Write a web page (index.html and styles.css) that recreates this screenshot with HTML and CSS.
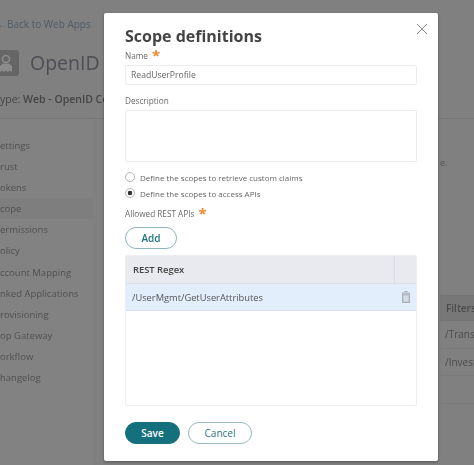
FILE: index.html
```html
<!DOCTYPE html>
<html lang="en">
<head>
<meta charset="utf-8">
<title>Scope definitions</title>
<link rel="stylesheet" href="styles.css">
</head>
<body>
<div class="page">
  <div class="back"><span class="arrow">&larr;</span>Back to Web Apps</div>
  <div class="app-head">
    <svg class="app-icon" width="19" height="26" viewBox="0 0 19 26"><rect x="-8" width="27" height="26" rx="3" fill="#666"/><circle cx="6" cy="9" r="3.500" fill="none" stroke="#8c8c8c" stroke-width="1.500"/><path d="M0 22v-6l3-2.500h6l3 2.500v6l-2-1.500-2 1.500-2-1.500-2 1.500-2-1.500z" fill="#8c8c8c"/></svg>
    <div class="app-name">OpenID Connect</div>
  </div>
  <div class="app-type">ype: <b>Web - OpenID Connect</b></div>
  <div class="main">
    <nav class="nav">
      <div>ettings</div>
      <div>rust</div>
      <div>okens</div>
      <div class="active">cope</div>
      <div>ermissions</div>
      <div>olicy</div>
      <div>ccount Mapping</div>
      <div>nked Applications</div>
      <div>rovisioning</div>
      <div>op Gateway</div>
      <div>orkflow</div>
      <div>hangelog</div>
    </nav>
    <div class="behind">
      <div class="note">e.</div>
      <div class="bg-table">
        <div class="bg-head">Filters</div>
        <div class="bg-row">/Transactions</div>
        <div class="bg-row">/Investments</div>
        <div class="bg-row"></div>
      </div>
    </div>
  </div>
</div>

<div class="modal">
  <svg class="close" width="12" height="12" viewBox="0 0 12 12"><path d="M1 1l10 10M11 1L1 11" stroke="#8f8f8f" stroke-width="1" fill="none"/></svg>
  <h2 class="title">Scope definitions</h2>
  <label class="label name-label">Name <span class="req">*</span></label>
  <div class="input">ReadUserProfile</div>
  <label class="label desc-label">Description</label>
  <div class="textarea"></div>
  <div class="radios">
    <div class="radio"><span class="dot"></span>Define the scopes to retrieve custom claims</div>
    <div class="radio"><span class="dot on"></span>Define the scopes to access APIs</div>
  </div>
  <label class="label api-label">Allowed REST APIs <span class="req">*</span></label>
  <button class="btn add">Add</button>
  <div class="table">
    <div class="thead"><div class="th">REST Regex</div><div class="th-end"></div></div>
    <div class="tr">
      <span>/UserMgmt/GetUserAttributes</span>
      <svg class="trash" width="8" height="12" viewBox="0 0 8 12"><path d="M2.500 .5h3M0 2h8" stroke="#a9b0ba" stroke-width="1" fill="none"/><rect x=".5" y="3" width="7" height="8.500" fill="#c3cad3" stroke="#a9b0ba"/><rect x="2" y="5" width="4" height="5" fill="#d3dbe5"/></svg>
    </div>
  </div>
  <div class="actions">
    <button class="btn save">Save</button>
    <button class="btn cancel">Cancel</button>
  </div>
</div>
</body>
</html>
```

FILE: styles.css
```css
* { box-sizing: border-box; }
html, body { margin: 0; height: 100%; overflow: hidden; }
body {
  background: #808080;
  font-family: "Open Sans", "Liberation Sans", sans-serif;
  color: #555;
}
.page { height: 465px; padding-top: 17px; overflow: hidden; filter: blur(.4px); }
.back { display: flex; align-items: center; font-size: 10px; line-height: 15px; color: #4f5a66; white-space: nowrap; }
.arrow { width: 7px; overflow: hidden; flex: none; direction: rtl; }
.app-head { display: flex; align-items: center; gap: 11px; margin-top: 18px; height: 26px; }
.app-icon { display: block; }
.app-name { font-size: 19.500px; line-height: 26px; color: #4d4d55; white-space: nowrap; }
.app-type { font-size: 10.500px; line-height: 16px; margin-top: 15px; color: #444; white-space: nowrap; border-bottom: 1px solid #777; padding-bottom: 11px; }
.app-type b { font-weight: 600; }
.main { display: flex; justify-content: space-between; }
.nav { width: 93px; padding-top: 16px; font-size: 9.500px; line-height: 21.100px; color: #505050; white-space: nowrap; background: #828282; height: 346px; }
.nav .active { background: #7e7e7e; }
.behind { width: 34px; }
.note { font-size: 9px; color: #555; margin-top: 37px; line-height: 14px; }
.bg-table { margin-top: 125px; font-size: 10px; color: #4a4a4a; white-space: nowrap; overflow: hidden; }
.bg-head { height: 26px; line-height: 26px; background: #777; font-weight: 600; padding-left: 6px; }
.bg-row { height: 27.500px; line-height: 27px; padding-left: 5px; border-bottom: 1px solid #7a7a7a; }

.modal {
  position: absolute; left: 104px; top: 13px; width: 334px; height: 448px;
  background: #fff; padding: 12px 21px 0; border-radius: 2px;
  box-shadow: 0 1px 3px rgba(0,0,0,.35);
  color: #666;
  filter: blur(.3px);
}
.close { position: absolute; right: 10px; top: 10px; }
.title { margin: 0; font-size: 16px; line-height: 23px; font-weight: 700; color: #444; }
.label { display: block; font-size: 8.200px; line-height: 13px; color: #6a6a6a; }
.req { color: #ee8a2e; font-size: 15px; line-height: 10px; font-weight: 700; vertical-align: -2px; margin-left: 2px; }
.name-label { height: 17px; padding-top: 1px; }
.input { height: 20px; border: 1px solid #ececec; border-radius: 2px; padding-left: 5px; font-size: 8.600px; line-height: 18px; color: #666; }
.desc-label { margin-top: 9px; height: 16px; padding-top: 0; }
.textarea { height: 52px; border: 1px solid #ececec; border-radius: 2px; }
.radios { margin-top: 7px; }
.radio { display: flex; align-items: center; gap: 5px; height: 16px; font-size: 8px; color: #666; }
.dot { width: 10px; height: 10px; border-radius: 50%; border: 1px solid #b4b4b4; background: #fff; flex: none; }
.dot.on { background: radial-gradient(circle, #333 0 2px, #fff 2.600px); }
.api-label { margin-top: 2px; height: 22px; padding-top: 3.500px; }
.btn { display: block; font-family: inherit; font-size: 10px; font-weight: 600; border-radius: 11px; height: 22px; padding: 0; cursor: pointer; }
.add { width: 52px; margin-top: 2px; background: #fff; border: 1px solid #8db7bc; color: #1d7480; }
.table { margin-top: 6px; height: 151px; border: 1px solid #eceef1; border-radius: 2px; }
.thead { display: flex; height: 28px; background: #e8eaef; border-bottom: 1px solid #dde0e6; }
.th { flex: 1; font-size: 9.400px; font-weight: 600; line-height: 27px; color: #444; padding-left: 7px; }
.th-end { width: 22px; border-left: 1px solid #d8dbe1; }
.tr { display: flex; align-items: center; justify-content: space-between; height: 27px; background: #e2eefb; border-bottom: 1px solid #d9dfe6; padding: 0 6px 0 6px; font-size: 9.300px; color: #555; }
.trash { display: block; }
.actions { display: flex; gap: 8px; margin-top: 16px; }
.save { width: 55px; background: #14707c; border: 1px solid #14707c; color: #fff; }
.cancel { width: 64px; background: #fff; border: 1px solid #9ab8bc; color: #2a7681; font-weight: 400; }
```
